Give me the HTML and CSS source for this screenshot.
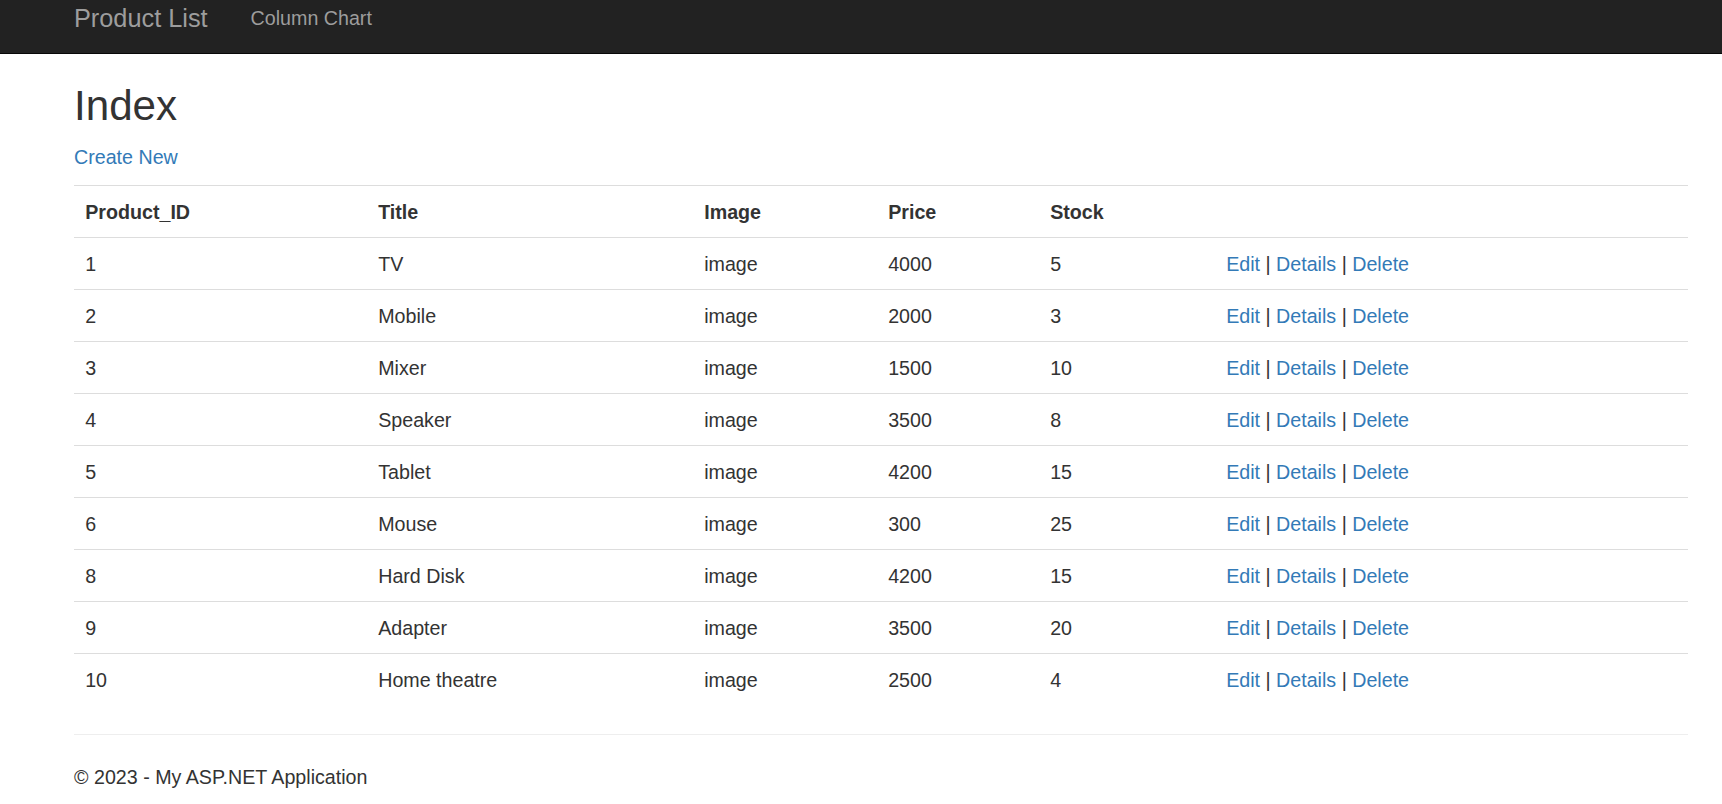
FILE: index.html
```html
<!DOCTYPE html>
<html>
<head>
<meta charset="utf-8">
<title>Index - My ASP.NET Application</title>
<link rel="stylesheet" href="styles.css">
</head>
<body>
<div class="navbar">
  <div class="container nav-inner">
    <a class="brand" href="#">Product List</a>
    <ul class="nav">
      <li><a href="#">Column Chart</a></li>
    </ul>
  </div>
</div>
<div class="container body-content">
  <h2>Index</h2>
  <p class="create"><a href="#">Create New</a></p>
  <table class="table">
    <colgroup>
      <col class="w-id"><col class="w-title"><col class="w-image"><col class="w-price"><col class="w-stock"><col>
    </colgroup>
    <tr><th>Product_ID</th><th>Title</th><th>Image</th><th>Price</th><th>Stock</th><th></th></tr>
    <tr><td>1</td><td>TV</td><td>image</td><td>4000</td><td>5</td><td><a href="#">Edit</a> | <a href="#">Details</a> | <a href="#">Delete</a></td></tr>
    <tr><td>2</td><td>Mobile</td><td>image</td><td>2000</td><td>3</td><td><a href="#">Edit</a> | <a href="#">Details</a> | <a href="#">Delete</a></td></tr>
    <tr><td>3</td><td>Mixer</td><td>image</td><td>1500</td><td>10</td><td><a href="#">Edit</a> | <a href="#">Details</a> | <a href="#">Delete</a></td></tr>
    <tr><td>4</td><td>Speaker</td><td>image</td><td>3500</td><td>8</td><td><a href="#">Edit</a> | <a href="#">Details</a> | <a href="#">Delete</a></td></tr>
    <tr><td>5</td><td>Tablet</td><td>image</td><td>4200</td><td>15</td><td><a href="#">Edit</a> | <a href="#">Details</a> | <a href="#">Delete</a></td></tr>
    <tr><td>6</td><td>Mouse</td><td>image</td><td>300</td><td>25</td><td><a href="#">Edit</a> | <a href="#">Details</a> | <a href="#">Delete</a></td></tr>
    <tr><td>8</td><td>Hard Disk</td><td>image</td><td>4200</td><td>15</td><td><a href="#">Edit</a> | <a href="#">Details</a> | <a href="#">Delete</a></td></tr>
    <tr><td>9</td><td>Adapter</td><td>image</td><td>3500</td><td>20</td><td><a href="#">Edit</a> | <a href="#">Details</a> | <a href="#">Delete</a></td></tr>
    <tr><td>10</td><td>Home theatre</td><td>image</td><td>2500</td><td>4</td><td><a href="#">Edit</a> | <a href="#">Details</a> | <a href="#">Delete</a></td></tr>
  </table>
  <hr>
  <footer>
    <p>&copy; 2023 - My ASP.NET Application</p>
  </footer>
</div>
</body>
</html>
```

FILE: styles.css
```css
* { box-sizing: border-box; }
html, body { margin: 0; padding: 0; }
body {
  font-family: "Liberation Sans", Arial, Helvetica, sans-serif;
  font-size: 19.67px;
  line-height: 28px;
  color: #333;
  background: #fff;
}
a { color: #337ab7; text-decoration: none; }

.container {
  padding-left: 74px;
  padding-right: 34px;
}

.navbar {
  height: 54px;
  background: #222;
  border-bottom: 1px solid #080808;
}
.nav-inner {
  display: flex;
  align-items: flex-start;
}
.brand {
  display: block;
  color: #9d9d9d;
  font-size: 25.3px;
  line-height: 28px;
  padding: 4px 22px 0 0;
}
.nav {
  display: flex;
  list-style: none;
  margin: 0;
  padding: 0;
}
.nav a {
  display: block;
  color: #9d9d9d;
  padding: 4px 21px 0;
  line-height: 28px;
}

.body-content { padding-top: 1px; }

h2 {
  font-size: 42.15px;
  font-weight: 500;
  line-height: 46.4px;
  margin: 28px 0 14px;
}
.create { margin: 0 0 14px; }

.table {
  width: 100%;
  table-layout: fixed;
  border-collapse: collapse;
  border-spacing: 0;
  margin-bottom: 29px;
}
.w-id { width: 293px; }
.w-title { width: 326px; }
.w-image { width: 184px; }
.w-price { width: 162px; }
.w-stock { width: 176px; }
.table th, .table td {
  text-align: left;
  padding: 11.5px 11.2px;
  line-height: 28px;
  border-top: 1px solid #ddd;
  vertical-align: top;
}
.table th { font-weight: bold; }

hr {
  margin: 29px 0 28px;
  border: 0;
  border-top: 1px solid #eee;
  height: 0;
}
footer p { margin: 0 0 14px; }
```
